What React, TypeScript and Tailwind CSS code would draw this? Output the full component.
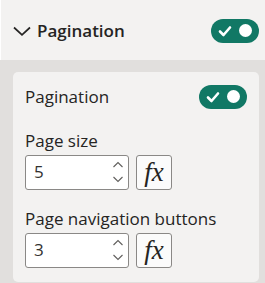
function Toggle() {
  return (
    <div className="flex h-6 w-12 items-center justify-between rounded-full bg-[#117865] px-[7px]">
      <svg width="14" height="12" viewBox="0 0 14 12">
        <path d="M2 6.5 L5.5 10 L12 2.5" fill="none" stroke="white" strokeWidth="2.6" strokeLinecap="round" strokeLinejoin="round" />
      </svg>
      <div className="h-[13px] w-[13px] rounded-full bg-white" />
    </div>
  );
}

function NumberField({ value }: { value: string }) {
  return (
    <div className="flex gap-[7px]">
      <div className="flex h-[35px] w-[104px] items-center justify-between rounded-[3px] border border-[#8a8886] bg-white pl-[8px] pr-[4px]">
        <span className="text-[17px] text-[#323130]">{value}</span>
        <svg width="12" height="24" viewBox="0 0 12 24" className="text-[#605e5c]">
          <path d="M1.5 7 L6 2.5 L10.5 7" fill="none" stroke="currentColor" strokeWidth="1.1" />
          <path d="M1.5 17 L6 21.5 L10.5 17" fill="none" stroke="currentColor" strokeWidth="1.1" />
        </svg>
      </div>
      <div className="flex h-[35px] w-[36px] items-center justify-center rounded-[3px] border border-[#8a8886] bg-[#fbfbfb]">
        <span className="font-['Liberation_Serif',serif] text-[27px] italic leading-none text-[#252423]">fx</span>
      </div>
    </div>
  );
}

export default function App() {
  return (
    <div className="h-[283px] w-[265px] bg-[#e1dfdd] font-['Open_Sans',sans-serif] text-[#252423]">
      <div className="flex h-[60px] items-center justify-between border-l border-white bg-[#f3f2f1] pl-[12px] pr-[6px] pt-[1px]">
        <div className="flex items-center gap-[6px]">
          <svg width="18" height="10" viewBox="0 0 18 10">
            <path d="M1 1.5 L9 8.8 L17 1.5" fill="none" stroke="#252423" strokeWidth="1.7" />
          </svg>
          <span className="text-[17px] font-semibold">Pagination</span>
        </div>
        <Toggle />
      </div>
      <div className="ml-[13px] mt-[12px] mr-[6px] flex h-[210px] flex-col rounded-[5px] bg-[#f3f2f1] pl-[12px] pr-[12px] pt-[12px]">
        <div className="flex items-center justify-between">
          <span className="text-[17px]">Pagination</span>
          <Toggle />
        </div>
        <span className="mt-[17px] text-[17px] leading-[28px]">Page size</span>
        <NumberField value="5" />
        <span className="mt-[15px] text-[17px] leading-[28px]">Page navigation buttons</span>
        <NumberField value="3" />
      </div>
    </div>
  );
}
